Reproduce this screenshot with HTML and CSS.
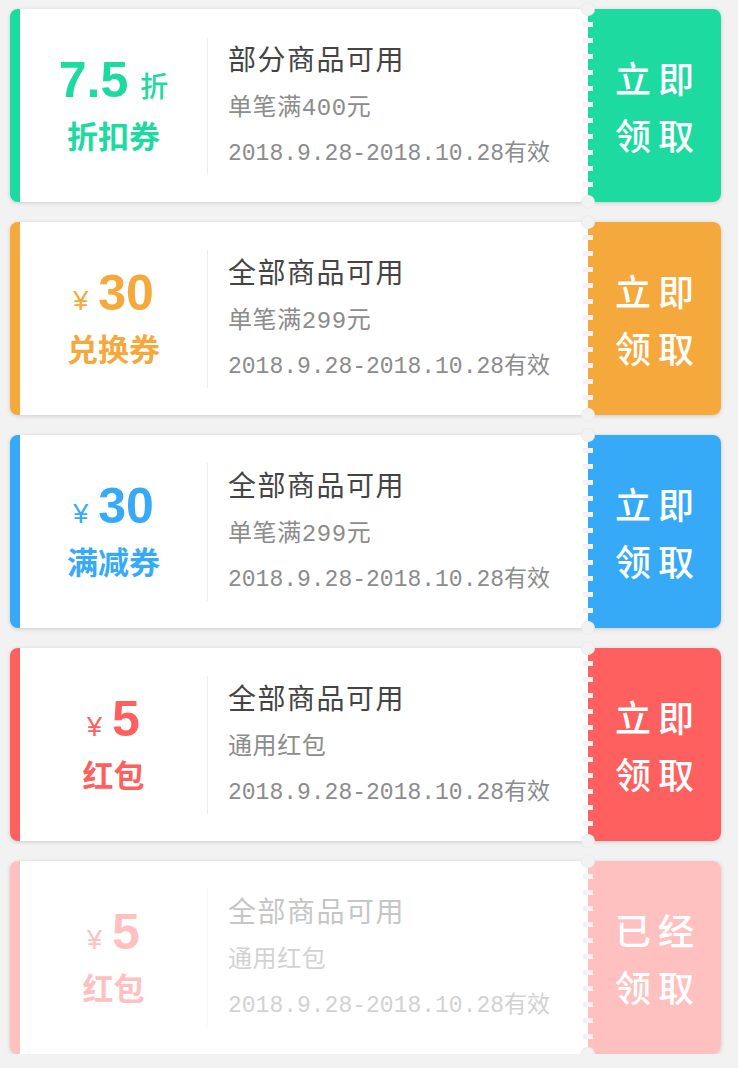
FILE: index.html
```html
<!DOCTYPE html>
<html lang="zh-CN">
<head>
<meta charset="utf-8">
<title>优惠券</title>
<link rel="stylesheet" href="styles.css">
</head>
<body>
<div class="list">
  <div class="coupon green">
    <div class="main">
      <div class="value">
        <div class="amount"><span class="num">7.5</span><span class="unit">折</span></div>
        <div class="kind">折扣券</div>
      </div>
      <div class="info">
        <div class="title">部分商品可用</div>
        <div class="cond">单笔满400元</div>
        <div class="date">2018.9.28-2018.10.28有效</div>
      </div>
    </div>
    <div class="action"><span>立即</span><span>领取</span></div>
  </div>

  <div class="coupon orange">
    <div class="main">
      <div class="value">
        <div class="amount"><span class="yen">¥</span><span class="num">30</span></div>
        <div class="kind">兑换券</div>
      </div>
      <div class="info">
        <div class="title">全部商品可用</div>
        <div class="cond">单笔满299元</div>
        <div class="date">2018.9.28-2018.10.28有效</div>
      </div>
    </div>
    <div class="action"><span>立即</span><span>领取</span></div>
  </div>

  <div class="coupon blue">
    <div class="main">
      <div class="value">
        <div class="amount"><span class="yen">¥</span><span class="num">30</span></div>
        <div class="kind">满减券</div>
      </div>
      <div class="info">
        <div class="title">全部商品可用</div>
        <div class="cond">单笔满299元</div>
        <div class="date">2018.9.28-2018.10.28有效</div>
      </div>
    </div>
    <div class="action"><span>立即</span><span>领取</span></div>
  </div>

  <div class="coupon red">
    <div class="main">
      <div class="value">
        <div class="amount"><span class="yen">¥</span><span class="num">5</span></div>
        <div class="kind">红包</div>
      </div>
      <div class="info">
        <div class="title">全部商品可用</div>
        <div class="cond">通用红包</div>
        <div class="date">2018.9.28-2018.10.28有效</div>
      </div>
    </div>
    <div class="action"><span>立即</span><span>领取</span></div>
  </div>

  <div class="coupon used">
    <div class="main">
      <div class="value">
        <div class="amount"><span class="yen">¥</span><span class="num">5</span></div>
        <div class="kind">红包</div>
      </div>
      <div class="info">
        <div class="title">全部商品可用</div>
        <div class="cond">通用红包</div>
        <div class="date">2018.9.28-2018.10.28有效</div>
      </div>
    </div>
    <div class="action"><span>已经</span><span>领取</span></div>
  </div>
</div>
</body>
</html>
```

FILE: styles.css
```css
html, body {
  margin: 0;
  padding: 0;
  background: #f2f2f2;
}

body {
  font-family: "Noto Sans CJK SC", "Liberation Sans", sans-serif;
  padding: 9px 17px 0 10px;
}

.list {
  display: flex;
  flex-direction: column;
  gap: 20px;
}

.coupon {
  --c: #1cdaa0;
  position: relative;
  display: flex;
  height: 193px;
  background: #fff;
  border-left: 10px solid var(--c);
  border-radius: 8px;
  box-shadow: 0 1px 4px rgba(0, 0, 0, 0.16);
}

.coupon.green { --c: #1cdaa0; }
.coupon.orange { --c: #f5a83b; }
.coupon.blue { --c: #37aaf7; }
.coupon.red { --c: #fe5f5f; }
.coupon.used { --c: #ffc0c0; }

/* notches at top and bottom of the tear line */
.coupon::before,
.coupon::after {
  content: "";
  position: absolute;
  right: 126px;
  width: 14px;
  height: 14px;
  border-radius: 50%;
  background: #f2f2f2;
  box-shadow: inset 0 0 2px rgba(0, 0, 0, 0.08);
  z-index: 2;
}
.coupon::before { top: -7px; }
.coupon::after { bottom: -7px; }

.main {
  flex: 1;
  display: flex;
  align-items: center;
}

.value {
  width: 187px;
  display: flex;
  flex-direction: column;
  align-items: center;
  color: var(--c);
}

.amount {
  display: flex;
  align-items: baseline;
  justify-content: center;
  height: 48px;
  line-height: 48px;
  margin-bottom: 11px;
}

.num {
  font-family: "Liberation Sans", Arial, sans-serif;
  font-weight: bold;
  font-size: 50px;
}

.unit {
  font-size: 28px;
  font-weight: 500;
  margin-left: 12px;
}

.yen {
  font-family: "Liberation Sans", Arial, sans-serif;
  font-size: 27px;
  margin-right: 10px;
}

.kind {
  font-size: 31px;
  font-weight: bold;
  line-height: 40px;
}

.info {
  box-sizing: border-box;
  height: 138px;
  padding-top: 3px;
  border-left: 1px solid #eeeeee;
  padding-left: 20px;
  display: flex;
  flex-direction: column;
  font-family: "Liberation Mono", "Noto Sans CJK SC", monospace;
}

.title {
  flex: none;
  font-size: 28px;
  line-height: 46px;
  letter-spacing: 1.5px;
  color: #444444;
}

.cond {
  flex: none;
  font-size: 24px;
  line-height: 46px;
  letter-spacing: 0.6px;
  color: #8c8c8c;
}

.date {
  flex: none;
  font-size: 23px;
  line-height: 46px;
  color: #8c8c8c;
  margin-top: -1px;
}

.used .title { color: #c6c6c6; }
.used .cond,
.used .date { color: #d2d2d2; }
.used .info { border-left-color: #f6f6f6; }

.action {
  position: relative;
  width: 133px;
  background: var(--c);
  border-radius: 0 8px 8px 0;
  display: flex;
  flex-direction: column;
  align-items: center;
  justify-content: center;
  color: #fff;
  font-size: 36px;
  font-weight: 500;
  line-height: 57px;
  letter-spacing: 7px;
  padding-left: 7px;
  box-sizing: border-box;
}

/* perforated tear line */
.action::before {
  content: "";
  position: absolute;
  left: -5px;
  top: 13px;
  width: 10px;
  height: 167px;
  background: repeating-linear-gradient(to bottom, #f2f2f2 0 5px, transparent 5px 16px);
}
```
